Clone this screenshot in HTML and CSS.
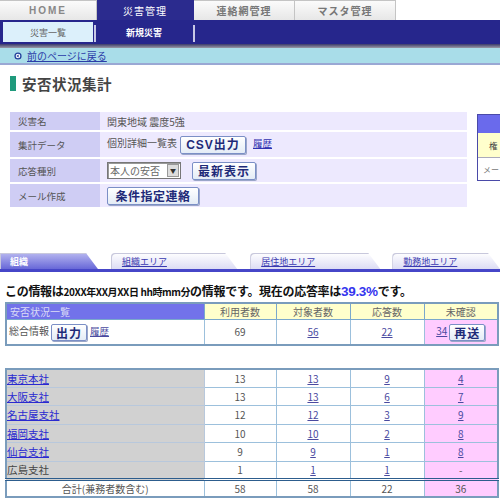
FILE: index.html
```html
<!DOCTYPE html>
<html lang="ja">
<head>
<meta charset="utf-8">
<title>安否状況集計</title>
<link rel="stylesheet" href="styles.css">
</head>
<body>
<div class="page">
  <div class="topnav">
    <div class="navtab home">HOME</div>
    <div class="navtab active">災害管理</div>
    <div class="navtab">連絡網管理</div>
    <div class="navtab">マスタ管理</div>
  </div>
  <div class="subnav">
    <div class="subtab">災害一覧</div>
    <div class="subsep"></div>
    <div class="subtab current">新規災害</div>
    <div class="subsep"></div>
  </div>
  <div class="shadow"></div>
  <div class="backbar">
    <svg class="backicon" width="8" height="8" viewBox="0 0 8 8"><circle cx="4" cy="4" r="3.6" fill="#1f3f9a"/><circle cx="4" cy="4" r="2.3" fill="#fff"/><path d="M2.4 4 L4.6 2.6 L4.6 5.4 Z" fill="#1f3f9a"/></svg>
    <a href="#" class="backlink">前のページに戻る</a>
  </div>
  <h1 class="title"><span class="mark"></span>安否状況集計</h1>

  <div class="formarea">
    <table class="form">
      <tr class="r1"><th>災害名</th><td>関東地域 震度5強</td></tr>
      <tr class="r2"><th>集計データ</th><td><span class="lbl">個別詳細一覧表</span><button class="btn csv">CSV出力</button><a href="#" class="hist">履歴</a></td></tr>
      <tr class="r3"><th>応答種別</th><td><span class="select">本人の安否<span class="arrow">▼</span></span><button class="btn latest">最新表示</button></td></tr>
      <tr class="r4"><th>メール作成</th><td><button class="btn cond">条件指定連絡</button></td></tr>
    </table>
    <div class="sidebox">
      <div class="sb-head"></div>
      <div class="sb-yellow">権</div>
      <div class="sb-white">メー</div>
    </div>
  </div>

  <div class="tabs">
    <div class="tab active">組織</div>
    <div class="tab"><a href="#">組織エリア</a></div>
    <div class="tab"><a href="#">居住地エリア</a></div>
    <div class="tab"><a href="#">勤務地エリア</a></div>
  </div>

  <p class="info">この情報は<span class="dt">20XX年XX月XX日 hh時mm分</span>の情報です。現在の応答率は<span class="rate">39.3%</span>です。</p>

  <table class="summary grid">
    <colgroup><col class="c0"><col class="c1"><col class="c2"><col class="c3"><col class="c4"></colgroup>
    <tr class="head">
      <th class="first">安否状況一覧</th><th>利用者数</th><th>対象者数</th><th>応答数</th><th class="pinkh">未確認</th>
    </tr>
    <tr class="total-row">
      <td class="name">総合情報<button class="btn small">出力</button><a href="#" class="hist">履歴</a></td>
      <td>69</td><td><a href="#">56</a></td><td><a href="#">22</a></td>
      <td class="pink"><a href="#">34</a><button class="btn small resend">再送</button></td>
    </tr>
  </table>

  <table class="detail grid">
    <colgroup><col class="c0"><col class="c1"><col class="c2"><col class="c3"><col class="c4"></colgroup>
    <tr><td class="name"><a href="#">東京本社</a></td><td>13</td><td><a href="#">13</a></td><td><a href="#">9</a></td><td class="pink"><a href="#">4</a></td></tr>
    <tr><td class="name"><a href="#">大阪支社</a></td><td>13</td><td><a href="#">13</a></td><td><a href="#">6</a></td><td class="pink"><a href="#">7</a></td></tr>
    <tr><td class="name"><a href="#">名古屋支社</a></td><td>12</td><td><a href="#">12</a></td><td><a href="#">3</a></td><td class="pink"><a href="#">9</a></td></tr>
    <tr><td class="name"><a href="#">福岡支社</a></td><td>10</td><td><a href="#">10</a></td><td><a href="#">2</a></td><td class="pink"><a href="#">8</a></td></tr>
    <tr><td class="name"><a href="#">仙台支社</a></td><td>9</td><td><a href="#">9</a></td><td><a href="#">1</a></td><td class="pink"><a href="#">8</a></td></tr>
    <tr><td class="name plain">広島支社</td><td>1</td><td><a href="#">1</a></td><td><a href="#">1</a></td><td class="pink">-</td></tr>
    <tr class="sum"><td class="center">合計(兼務者数含む)</td><td>58</td><td>58</td><td>22</td><td class="pink">36</td></tr>
  </table>
</div>
</body>
</html>
```

FILE: styles.css
```css
* { box-sizing: border-box; }
html, body { margin: 0; padding: 0; background: #fff; }
body {
  width: 500px; height: 500px; overflow: hidden;
  font-family: "Noto Sans CJK JP", "Noto Sans", "Liberation Sans", sans-serif;
  font-size: 10px; color: #555;
}
.page { width: 500px; }
a { color: #3535b0; text-decoration: underline; }

/* top nav */
.topnav { display: flex; height: 20px; }
.navtab {
  width: 97px; height: 20px; border: 1px solid #c4c4c4; border-bottom: none; border-left: none;
  background: linear-gradient(#fbfbfb, #e7e7e7);
  display: flex; align-items: center; justify-content: center;
  font-size: 10px; color: #777; font-weight: bold; letter-spacing: 1px;
}
.navtab:nth-child(3), .navtab:nth-child(4) { width: 101px; }
.navtab.home { font-family: "Liberation Sans", sans-serif; letter-spacing: 2px; color: #888; }
.navtab.active { background: #2b2b8e; color: #fff; border-color: #2b2b8e; font-weight: normal; }

.subnav { height: 24px; background: #26268c; display: flex; align-items: center; padding-left: 3px; }
.subtab {
  width: 90px; height: 20px; background: #dcf0fb; color: #666;
  display: flex; align-items: center; justify-content: center; font-size: 9px;
}
.subtab.current { background: transparent; color: #fff; font-weight: bold; width: 96px; }
.subsep { width: 2px; height: 17px; background: #c8c8e6; margin-left: 1px; margin-top: 3px; }

.shadow { height: 4px; background: linear-gradient(#3a3a6a, #9a9aa6); }
.backbar {
  height: 17px; background: #a9dde9; border-bottom: 2px solid #9aa8d4;
  display: flex; align-items: center; padding-left: 14px; gap: 5px;
}
.backicon { display: block; }
.backlink { font-size: 10px; color: #2c3ca8; }

.title {
  margin: 10px 0 0 10px; height: 16px;
  display: flex; align-items: center; gap: 6px;
  font-size: 14.5px; font-weight: bold; color: #444; letter-spacing: 0.5px;
}
.mark { width: 6px; height: 15px; background: #1f9a7c; display: block; }

/* form */
.formarea { display: flex; align-items: flex-start; margin-top: 19px; margin-left: 10px; gap: 10px; }
.form { border-collapse: separate; border-spacing: 0 2.5px; width: 457px; flex: none; }
.form th {
  width: 90px; background: #cfcdf4; text-align: left; font-weight: normal;
  color: #555; padding: 0 0 0 8px; font-size: 9.5px;
}
.form td { background: #ede9fe; padding: 0 0 0 7px; font-size: 10px; color: #555; white-space: nowrap; }
.form tr.r1 th, .form tr.r1 td { height: 18px; }
.form tr.r2 th, .form tr.r2 td { height: 25px; }
.form tr.r3 th, .form tr.r3 td { height: 23px; }
.form tr.r4 th, .form tr.r4 td { height: 23px; }
.lbl { margin-right: 3px; }
.btn {
  font-family: "Noto Sans CJK JP", sans-serif; font-weight: bold; color: #1e2a78;
  background: linear-gradient(#ffffff, #e4ecf6); border: 1px solid #7b8fc6;
  border-radius: 2px; box-shadow: 1px 1px 0 #9aa6c8; padding: 0 4px; height: 18px;
  font-size: 12px; line-height: 16px; vertical-align: middle; letter-spacing: 1px;
}
.btn.csv { width: 66px; font-family: "Liberation Sans", "Noto Sans CJK JP", sans-serif; }
.hist { margin-left: 7px; font-size: 9.5px; color: #3030b0; }
.select {
  display: inline-flex; align-items: center; justify-content: space-between;
  width: 74px; height: 17px; border: 1px solid #777; background: #fff;
  font-size: 10px; color: #666; padding-left: 2px; vertical-align: middle;
  box-shadow: inset 1px 1px 0 #999;
}
.select .arrow {
  width: 12px; height: 13px; background: #ddd; border: 1px solid #999; font-size: 6px;
  display: flex; align-items: center; justify-content: center; color: #333; margin-right: 1px;
}
.btn.latest { margin-left: 11px; width: 64px; }
.btn.cond { width: 92px; letter-spacing: 0.5px; }

.sidebox { width: 23px; border: 1px solid #4a4aa8; border-right: none; margin-top: 4px; flex: none; }
.sb-head { height: 18px; background: #6a6aec; }
.sb-yellow { height: 25px; background: #ffffcc; display: flex; align-items: center; padding-left: 11px; font-size: 8.5px; color: #444; border-bottom: 1px solid #aab; overflow: hidden; }
.sb-white { height: 22px; background: #fff; display: flex; align-items: center; padding-left: 5px; font-size: 8px; color: #777; white-space: nowrap; }

/* tabs */
.tabs {
  display: flex; margin-top: 44px; height: 19px; align-items: flex-end;
  border-bottom: 3px solid #4646c8;
}
.tab {
  height: 16px; width: 129px; margin-left: 13px;
  background: linear-gradient(#ffffff, #dcdcf4);
  border-top-left-radius: 4px; border-top-right-radius: 10px;
  clip-path: polygon(0 0, calc(100% - 12px) 0, 100% 100%, 0 100%);
  display: flex; align-items: center; padding-left: 11px; font-size: 9px;
  box-shadow: inset 1px 1px 0 #c8c8dc;
}
.tab a { color: #3a3ab0; }
.tab.active {
  margin-left: 0; width: 100px; padding-left: 10px;
  background: linear-gradient(#b6b6f0, #6868d8);
  color: #fff; font-weight: bold; border-top-left-radius: 0;
}
.tab:nth-child(3) { width: 133px; margin-left: 13px; }
.tab:nth-child(4) { width: 110px; margin-left: 12px; }

.info {
  margin: 11px 0 0 5px; font-size: 12px; font-weight: bold; color: #111;
  white-space: nowrap; line-height: 16px; letter-spacing: -0.3px;
}
.info .dt { font-size: 10px; letter-spacing: -0.4px; }
.rate { color: #3535ee; font-size: 13.5px; font-family: "Liberation Sans", sans-serif; }

/* grids */
.grid { border-collapse: collapse; margin-left: 5px; width: 492px; table-layout: fixed; }
.grid col.c0 { width: 198px; }
.grid col.c1 { width: 72px; }
.grid col.c2 { width: 74px; }
.grid col.c3 { width: 74px; }
.grid col.c4 { width: 74px; }
.grid td, .grid th {
  border: 1px solid #9cc0dc; text-align: center; font-size: 10px; color: #555;
  padding: 0; font-weight: normal;
}
.grid td a { color: #4a4aa0; }
.summary { margin-top: 2px; border: 2px solid #7a9cbc; }
.summary .head th { height: 16px; background: #ffffcc; color: #666; border-color: #7aa8cc; }
.summary .head th.first { background: #7272ea; color: #dcdcf6; text-align: left; padding-left: 3px; }
.summary .total-row td { height: 25px; }
.summary td.name { text-align: left; padding-left: 2px; color: #555; white-space: nowrap; }
.btn.small { height: 17px; font-size: 12px; padding: 0 4px; line-height: 15px; margin-left: 2px; }
.summary .hist { margin-left: 3px; }
.pink { background: #ffccff; }
.resend { margin-left: 6px; }

.detail { margin-top: 22px; border: 2px solid #7a9cbc; }
.detail td { height: 18.5px; }
.detail td.name { background: #d1d1d1; text-align: left; padding-left: 0; border-color: #b8c8dc; }
.detail td.name a { color: #2a2ad0; font-size: 10.5px; }
.detail td.name.plain { color: #444; font-size: 10.5px; }
.detail tr.sum td { border-top: 3px double #2d5d8d; height: 16px; }
.detail td.center { text-align: center; }
```
